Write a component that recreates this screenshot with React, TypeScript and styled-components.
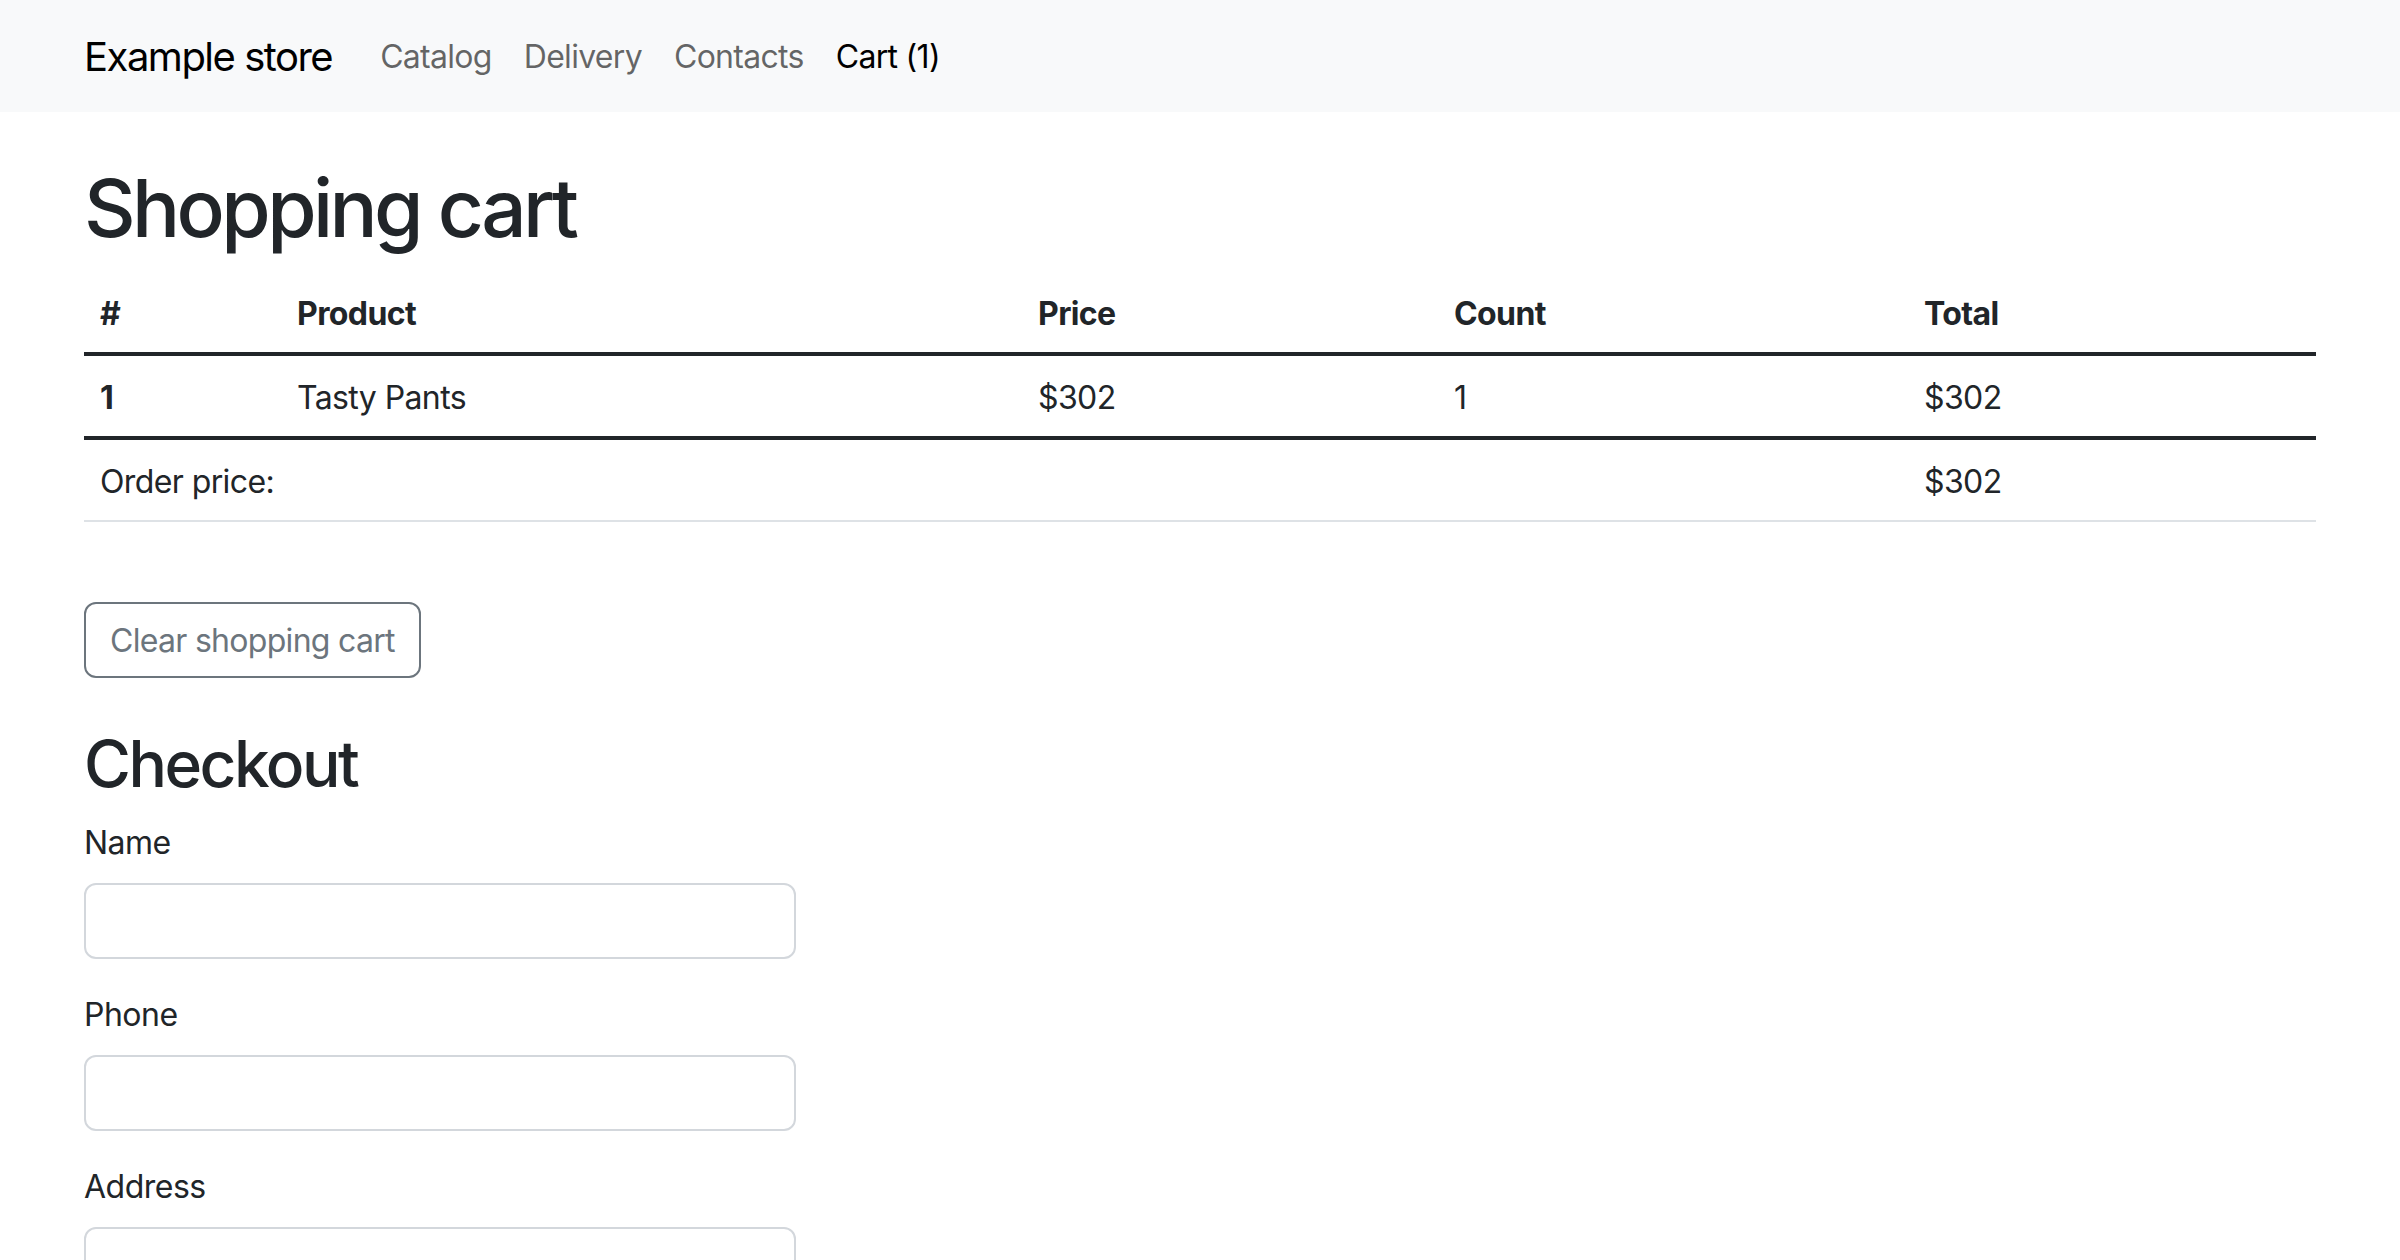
import React from "react";
import styled, { createGlobalStyle } from "styled-components";

const Global = createGlobalStyle`
  html, body { margin: 0; padding: 0; background: #fff; }
  body {
    font-family: Inter, "Noto Sans", "Liberation Sans", sans-serif;
    font-size: 32px;
    line-height: 1.5;
    color: #212529;
  }
  * { box-sizing: border-box; }
`;

const Navbar = styled.nav`
  background: #f8f9fa;
  height: 112px;
  display: flex;
  align-items: center;
  padding: 2px 84px 0;
`;

const Brand = styled.a`
  font-size: 40px;
  line-height: 60px;
  color: #000;
  text-decoration: none;
  margin-right: 32px;
  letter-spacing: -1.5px;
`;

const NavList = styled.ul`
  display: flex;
  list-style: none;
  margin: 0;
  padding: 0;
`;

const NavLink = styled.a<{ $active?: boolean }>`
  display: block;
  padding: 16px;
  line-height: 48px;
  font-size: 32px;
  color: ${(p) => (p.$active ? "#000" : "rgba(0,0,0,0.6)")};
  text-decoration: none;
  letter-spacing: -0.7px;
`;

const Container = styled.main`
  padding: 48px 84px 0;
`;

const Title = styled.h1`
  font-size: 80px;
  font-weight: 500;
  line-height: 96px;
  margin: 0 0 16px;
  letter-spacing: -3.6px;
`;

const Table = styled.table`
  width: 100%;
  border-collapse: collapse;
  table-layout: fixed;
  margin-bottom: 32px;
`;

const Cell = styled.td<{ $bold?: boolean }>`
  padding: 18px 16px 14px;
  line-height: 48px;
  font-size: 32px;
  font-weight: ${(p) => (p.$bold ? 700 : 400)};
  text-align: left;
  letter-spacing: -0.6px;
`;

const Row = styled.tr<{ $divider?: "dark" | "light" }>`
  border-bottom: ${(p) => (p.$divider === "dark" ? "4px solid #212529" : "2px solid #dee2e6")};
`;

const ButtonWrap = styled.div`
  margin: 80px 0 48px;
`;

const OutlineButton = styled.button`
  font-family: inherit;
  font-size: 32px;
  line-height: 48px;
  padding: 13px 24px 11px;
  border: 2px solid #6c757d;
  border-radius: 12px;
  background: transparent;
  color: #6c757d;
  letter-spacing: -0.7px;
`;

const SubTitle = styled.h2`
  font-size: 64px;
  font-weight: 500;
  line-height: 76.8px;
  margin: 0 0 16px;
  letter-spacing: -2.5px;
`;

const Field = styled.div`
  margin-bottom: 32px;
  width: 712px;
`;

const Label = styled.label`
  display: block;
  font-size: 32px;
  line-height: 48px;
  margin-bottom: 16px;
  letter-spacing: -0.5px;
`;

const Input = styled.input`
  display: block;
  width: 100%;
  height: 76px;
  padding: 12px 24px;
  font-size: 32px;
  font-family: inherit;
  border: 2px solid #d3d7dc;
  border-radius: 12px;
  background: #fff;
`;

const cols = [197, 741, 416, 470, 408];

export default function App() {
  return (
    <>
      <Global />
      <Navbar>
        <Brand href="#">Example store</Brand>
        <NavList>
          <li><NavLink href="#">Catalog</NavLink></li>
          <li><NavLink href="#">Delivery</NavLink></li>
          <li><NavLink href="#">Contacts</NavLink></li>
          <li><NavLink href="#" $active>Cart (1)</NavLink></li>
        </NavList>
      </Navbar>
      <Container>
        <Title>Shopping cart</Title>
        <Table>
          <colgroup>
            {cols.map((w, i) => (
              <col key={i} style={{ width: w }} />
            ))}
          </colgroup>
          <thead>
            <Row $divider="dark">
              <Cell as="th" $bold>#</Cell>
              <Cell as="th" $bold>Product</Cell>
              <Cell as="th" $bold>Price</Cell>
              <Cell as="th" $bold>Count</Cell>
              <Cell as="th" $bold>Total</Cell>
            </Row>
          </thead>
          <tbody>
            <Row $divider="dark">
              <Cell as="th" $bold>1</Cell>
              <Cell>Tasty Pants</Cell>
              <Cell>$302</Cell>
              <Cell>1</Cell>
              <Cell>$302</Cell>
            </Row>
          </tbody>
          <tfoot>
            <Row $divider="light">
              <Cell colSpan={4}>Order price:</Cell>
              <Cell>$302</Cell>
            </Row>
          </tfoot>
        </Table>
        <ButtonWrap>
          <OutlineButton>Clear shopping cart</OutlineButton>
        </ButtonWrap>
        <SubTitle>Checkout</SubTitle>
        <form>
          <Field>
            <Label>Name</Label>
            <Input type="text" />
          </Field>
          <Field>
            <Label>Phone</Label>
            <Input type="text" />
          </Field>
          <Field>
            <Label>Address</Label>
            <Input type="text" />
          </Field>
        </form>
      </Container>
    </>
  );
}
